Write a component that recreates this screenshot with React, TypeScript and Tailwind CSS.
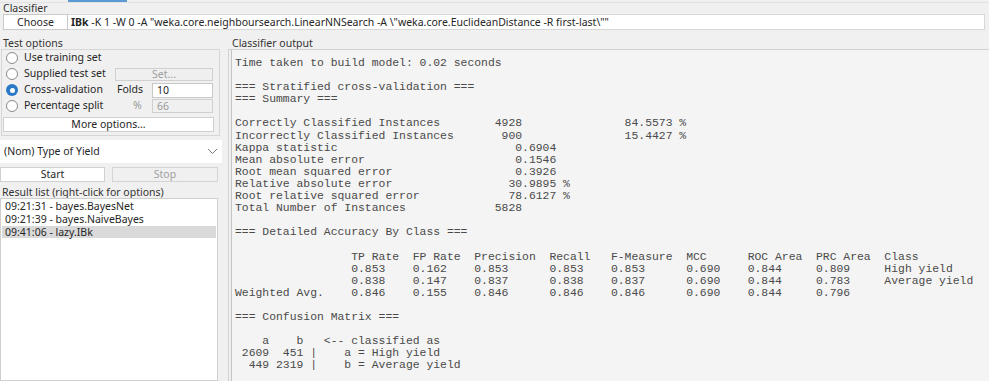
import React from "react";

const OUTPUT = `Time taken to build model: 0.02 seconds

=== Stratified cross-validation ===
=== Summary ===

Correctly Classified Instances        4928               84.5573 %
Incorrectly Classified Instances       900               15.4427 %
Kappa statistic                          0.6904
Mean absolute error                      0.1546
Root mean squared error                  0.3926
Relative absolute error                 30.9895 %
Root relative squared error             78.6127 %
Total Number of Instances             5828     

=== Detailed Accuracy By Class ===

                 TP Rate  FP Rate  Precision  Recall   F-Measure  MCC      ROC Area  PRC Area  Class
                 0.853    0.162    0.853      0.853    0.853      0.690    0.844     0.809     High yield
                 0.838    0.147    0.837      0.838    0.837      0.690    0.844     0.783     Average yield
Weighted Avg.    0.846    0.155    0.846      0.846    0.846      0.690    0.844     0.796     

=== Confusion Matrix ===

    a    b   <-- classified as
 2609  451 |    a = High yield
  449 2319 |    b = Average yield`;

function Radio({ checked }: { checked?: boolean }) {
  if (checked) {
    return (
      <span className="w-[12px] h-[12px] rounded-full bg-[#2a78c8] flex items-center justify-center shrink-0">
        <span className="w-[5px] h-[5px] rounded-full bg-white" />
      </span>
    );
  }
  return <span className="w-[12px] h-[12px] rounded-full bg-white border border-[#8a8a8a] shrink-0" />;
}

export default function App() {
  return (
    <div className="w-[989px] h-[381px] bg-[#f0f0f0] overflow-hidden flex flex-col text-[#262626] text-[10.5px] font-['Noto_Sans',sans-serif]">
      {/* tab strip remnant */}
      <div className="h-[3px] flex border-b border-[#e2e2e2]">
        <div className="ml-[68px] w-[59px] h-[2px] bg-[#5b9bd5]" />
      </div>
      {/* Classifier */}
      <div className="h-[11px] leading-[11px] pl-[3px] text-[#333]">Classifier</div>
      <div className="h-[16px] flex ml-[3px] mr-[4px]">
        <div className="w-[65px] h-full bg-white border border-[#c9c9c9] flex items-center justify-center leading-none">
          Choose
        </div>
        <div className="flex-1 h-full bg-white border border-l-0 border-[#d8d8d8] flex items-center pl-[3px] leading-none whitespace-pre overflow-hidden">
          <span className="font-bold">IBk</span>
          <span>{' -K 1 -W 0 -A "weka.core.neighboursearch.LinearNNSearch -A \\"weka.core.EuclideanDistance -R first-last\\""'}</span>
        </div>
      </div>

      {/* main */}
      <div className="flex-1 flex mt-[7px] min-h-0">
        {/* left column */}
        <div className="w-[222px] flex flex-col">
          <div className="h-[12px] leading-[12px] pl-[3px] text-[#333]">Test options</div>
          <div className="ml-[1px] w-[219px] h-[87px] border border-[#d6d6d6] flex flex-col">
            <div className="h-[16px] flex items-center pl-[4px] gap-[6px]">
              <Radio />
              <span>Use training set</span>
            </div>
            <div className="h-[16px] flex items-center pl-[4px]">
              <div className="w-[109px] flex items-center gap-[6px]">
                <Radio />
                <span>Supplied test set</span>
              </div>
              <div className="w-[98px] h-[13px] border border-[#d0d0d0] bg-[#efefef] flex items-center justify-center text-[#a0a0a0] leading-none">
                Set...
              </div>
            </div>
            <div className="h-[16px] flex items-center pl-[4px]">
              <div className="w-[109px] flex items-center gap-[6px]">
                <Radio checked />
                <span>Cross-validation</span>
              </div>
              <div className="w-[37px] pl-[2px]">Folds</div>
              <div className="w-[61px] h-[15px] bg-white border border-[#c8c8c8] flex items-center pl-[4px] leading-none">
                10
              </div>
            </div>
            <div className="h-[16px] flex items-center pl-[4px]">
              <div className="w-[109px] flex items-center gap-[6px]">
                <Radio />
                <span>Percentage split</span>
              </div>
              <div className="w-[37px] pl-[18px] text-[#9a9a9a]">%</div>
              <div className="w-[61px] h-[14px] bg-[#f0f0f0] border border-[#d0d0d0] flex items-center pl-[4px] text-[#9a9a9a] leading-none">
                66
              </div>
            </div>
            <div className="mt-[3px] ml-[1px] w-[211px] h-[15px] bg-white border border-[#d0d0d0] flex items-center justify-center leading-none">
              More options...
            </div>
          </div>

          <div className="mt-[4px] h-[23px] bg-white flex items-center justify-between pl-[4px] pr-[4px]">
            <span>(Nom) Type of Yield</span>
            <svg width="11" height="7" viewBox="0 0 11 7">
              <path d="M1 1 L5.5 5.5 L10 1" fill="none" stroke="#7a7a7a" strokeWidth="1" />
            </svg>
          </div>

          <div className="mt-[4px] h-[15px] flex">
            <div className="w-[105px] h-full bg-white border border-[#d0d0d0] flex items-center justify-center leading-none">
              Start
            </div>
            <div className="ml-[7px] w-[106px] h-full bg-[#f0f0f0] border border-[#d4d4d4] flex items-center justify-center text-[#a0a0a0] leading-none">
              Stop
            </div>
          </div>

          <div className="mt-[4px] h-[12px] leading-[12px] pl-[2px] text-[#333]">Result list (right-click for options)</div>
          <div className="flex-1 w-[218px] bg-white border border-[#cfcfcf] pt-[1px] px-[1px]">
            <div className="h-[13px] leading-[13px] pl-[3px]">09:21:31 - bayes.BayesNet</div>
            <div className="h-[13px] leading-[13px] pl-[3px]">09:21:39 - bayes.NaiveBayes</div>
            <div className="h-[12px] leading-[12px] pl-[3px] bg-[#d9d9d9]">09:41:06 - lazy.IBk</div>
          </div>
        </div>

        {/* right column */}
        <div className="flex-1 ml-[6px] flex flex-col min-w-0">
          <div className="h-[12px] leading-[12px] pl-[4px] text-[#333]">Classifier output</div>
          <div className="flex-1 border-l border-t border-[#d2d2d2] pl-[2px] flex min-h-0">
            <div className="flex-1 border-l border-[#c4c4c4] bg-[#f4f4f4] pl-[3px] pt-[7px] overflow-hidden">
              <pre className="m-0 font-['Liberation_Mono',monospace] text-[11.4px] leading-[12.1px] text-[#4a4a4a] whitespace-pre">
                {OUTPUT}
              </pre>
            </div>
          </div>
        </div>
      </div>
    </div>
  );
}
